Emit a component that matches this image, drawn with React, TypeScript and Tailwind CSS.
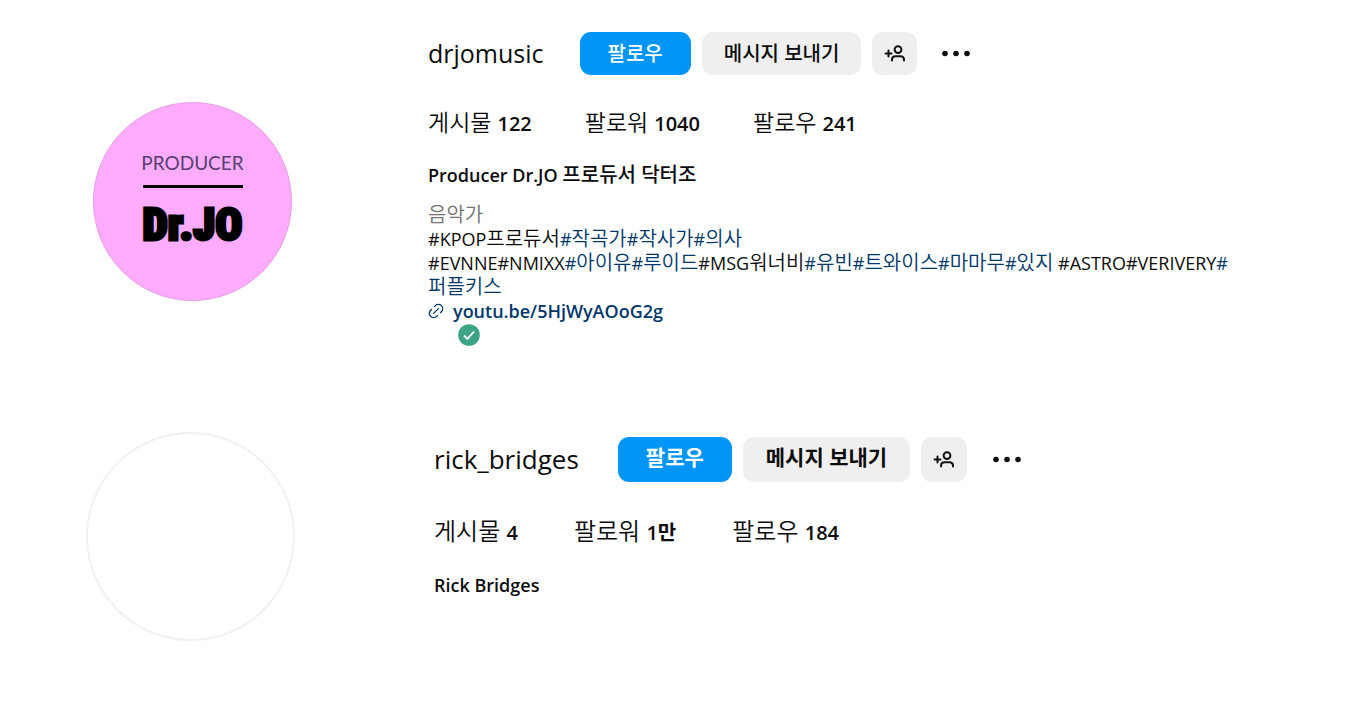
import type { ReactNode } from 'react'

const sans = "font-['Open_Sans','Noto_Sans_CJK_KR',sans-serif]"

function AddPersonIcon() {
  return (
    <svg width="22" height="22" viewBox="0 0 22 22" fill="none" stroke="#111" strokeWidth="2" strokeLinecap="round" aria-hidden="true">
      <path d="M4.5 7.5v6M1.5 10.5h6" />
      <circle cx="14" cy="6.6" r="3.4" />
      <path d="M8 17.6v-.8c0-2.2 1.6-3.6 3.6-3.6h4.8c2 0 3.6 1.4 3.6 3.6v.8" />
    </svg>
  )
}

function MoreIcon() {
  return (
    <svg width="30" height="8" viewBox="0 0 30 8" fill="#111" aria-hidden="true">
      <circle cx="4" cy="3.5" r="2.8" />
      <circle cx="15" cy="3.5" r="2.8" />
      <circle cx="26" cy="3.5" r="2.8" />
    </svg>
  )
}

function LinkIcon() {
  return (
    <svg width="16" height="16" viewBox="0 0 24 24" fill="none" stroke="#00376b" strokeWidth="2" strokeLinecap="round" strokeLinejoin="round" aria-hidden="true">
      <path d="m9.726 5.123 1.228-1.228a6.47 6.47 0 0 1 9.15 9.152l-1.227 1.227m-4.603 4.603-1.228 1.228a6.47 6.47 0 0 1-9.15-9.152l1.227-1.227" />
      <path d="M8.471 15.529 15.53 8.47" />
    </svg>
  )
}

// hangul runs a little larger and lighter than the latin text around it
function Ko({ children }: { children: ReactNode }) {
  return <span className="text-[20px] leading-none font-[350]">{children}</span>
}

function Tag({ name }: { name: string }) {
  return (
    <a href="#" className="text-[#00376b]">
      #<Ko>{name}</Ko>
    </a>
  )
}

function Stat({ label, value }: { label: string; value: string }) {
  return (
    <li className="font-[350]">
      {label} <span className="text-[20px] font-semibold">{value}</span>
    </li>
  )
}

function DrJoProfile() {
  return (
    <section className="flex items-start pt-8 pl-[93px]">
      <div className="mt-[70px] mr-[136px] flex size-[199px] shrink-0 flex-col items-center rounded-full border border-[#e79be6] bg-[#ffacff] pt-[48px]">
        <span className="font-['Lato',sans-serif] text-[19px] leading-6 text-[#573f70]">PRODUCER</span>
        <span className="mt-[10px] h-[3px] w-[100px] bg-black" />
        <span className="mt-2 font-['Impact','Roboto_Condensed','Roboto',sans-serif] text-[45px] leading-[58px] font-black text-black [-webkit-text-stroke:3px_black]">
          Dr.JO
        </span>
      </div>

      <div className="min-w-0">
        <div className="flex items-center">
          <h2 className="mr-9 text-[25px] leading-[43px]">drjomusic</h2>
          <button className="h-[43px] rounded-[11px] bg-[#0095f6] px-7 text-[20px] font-medium text-white">팔로우</button>
          <button className="ml-[11px] h-[43px] rounded-[11px] bg-[#efefef] px-[22px] text-[20px] font-medium">메시지 보내기</button>
          <button aria-label="비슷한 계정" className="ml-[11px] flex h-[43px] w-[45px] items-center justify-center rounded-[11px] bg-[#efefef]">
            <AddPersonIcon />
          </button>
          <button aria-label="옵션" className="ml-6">
            <MoreIcon />
          </button>
        </div>

        <ul className="mt-[31px] flex gap-[53px] text-[23px] leading-8">
          <Stat label="게시물" value="122" />
          <Stat label="팔로워" value="1040" />
          <Stat label="팔로우" value="241" />
        </ul>

        <h1 className="mt-[23px] text-[18px] leading-6 font-semibold">
          Producer Dr.JO <span className="text-[20px] leading-none font-medium">프로듀서 닥터조</span>
        </h1>
        <div className="mt-4 text-[18px] leading-6">
          <p className="text-[#737373]">
            <Ko>음악가</Ko>
          </p>
          <p>
            #KPOP<Ko>프로듀서</Ko>
            <Tag name="작곡가" />
            <Tag name="작사가" />
            <Tag name="의사" />
          </p>
          <p>
            #EVNNE#NMIXX
            <Tag name="아이유" />
            <Tag name="루이드" />
            #MSG<Ko>워너비</Ko>
            <Tag name="유빈" />
            <Tag name="트와이스" />
            <Tag name="마마무" />
            <Tag name="있지" /> #ASTRO#VERIVERY
            <a href="#" className="text-[#00376b]">
              #<br />
              <Ko>퍼플키스</Ko>
            </a>
          </p>
        </div>
        <a href="#" className="flex items-center gap-[9px] text-[18px] leading-6 font-semibold text-[#00376b]">
          <LinkIcon />
          youtu.be/5HjWyAOoG2g
        </a>
        <svg className="mt-px ml-[30px]" width="22" height="22" viewBox="0 0 22 22" aria-hidden="true">
          <circle cx="11" cy="11" r="10.8" fill="#3ca384" />
          <path d="M6 11.5l3.4 3.4L16 7.6" fill="none" stroke="#fff" strokeWidth="1.8" />
        </svg>
      </div>
    </section>
  )
}

function RickProfile() {
  return (
    <section className="mt-[86px] flex items-start pl-[86px]">
      <div className="size-[209px] shrink-0 rounded-full border-2 border-[#f1f1f1]" />
      <div className="mt-[5px] ml-[139px] min-w-0">
        <div className="flex items-center">
          <h2 className="mr-[39px] text-[26px] leading-[45px]">rick_bridges</h2>
          <button className="h-[45px] rounded-[11px] bg-[#0095f6] px-7 pb-1 text-[21px] font-bold text-white">팔로우</button>
          <button className="ml-[11px] h-[45px] rounded-[11px] bg-[#efefef] px-[23px] pb-1 text-[21px] font-bold">메시지 보내기</button>
          <button aria-label="비슷한 계정" className="ml-[11px] flex h-[45px] w-[46px] items-center justify-center rounded-[11px] bg-[#efefef]">
            <AddPersonIcon />
          </button>
          <button aria-label="옵션" className="ml-[25px]">
            <MoreIcon />
          </button>
        </div>

        <ul className="mt-[33px] flex gap-14 text-[24px] leading-8">
          <Stat label="게시물" value="4" />
          <Stat label="팔로워" value="1만" />
          <Stat label="팔로우" value="184" />
        </ul>

        <h1 className="mt-6 text-[18px] leading-6 font-semibold">Rick Bridges</h1>
      </div>
    </section>
  )
}

export default function App() {
  return (
    <main className={`min-h-screen bg-white pb-14 text-[#0c0c0c] ${sans}`}>
      <DrJoProfile />
      <RickProfile />
    </main>
  )
}
